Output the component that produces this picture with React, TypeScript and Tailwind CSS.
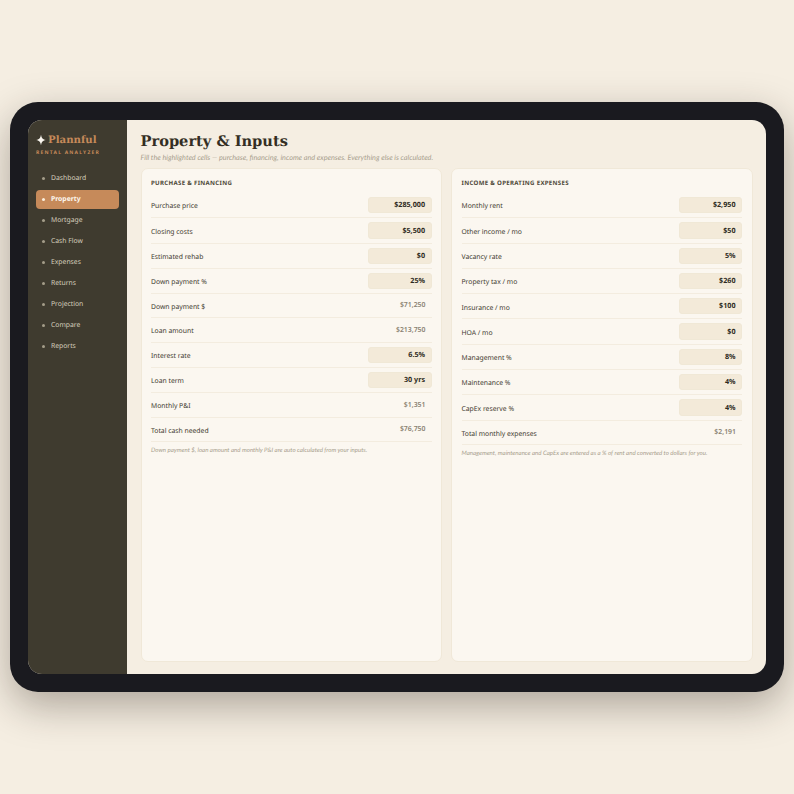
const nav = ["Dashboard","Property","Mortgage","Cash Flow","Expenses","Returns","Projection","Compare","Reports"];
type R = [string,string,boolean];
const left: R[] = [["Purchase price","$285,000",true],["Closing costs","$5,500",true],["Estimated rehab","$0",true],["Down payment %","25%",true],["Down payment $","$71,250",false],["Loan amount","$213,750",false],["Interest rate","6.5%",true],["Loan term","30 yrs",true],["Monthly P&I","$1,351",false],["Total cash needed","$76,750",false]];
const right: R[] = [["Monthly rent","$2,950",true],["Other income / mo","$50",true],["Vacancy rate","5%",true],["Property tax / mo","$260",true],["Insurance / mo","$100",true],["HOA / mo","$0",true],["Management %","8%",true],["Maintenance %","4%",true],["CapEx reserve %","4%",true],["Total monthly expenses","$2,191",false]];

function Row({ r }: { r: R }) {
  return (
    <div className="flex items-center justify-between border-b border-[#f3ecdf] py-1">
      <span className="pt-[1.5px] text-[6.8px] leading-[11px] text-[#3f3a2f]">{r[0]}</span>
      {r[2] ? (
        <span className="flex h-[16.3px] w-[63.5px] items-center justify-end rounded-[3px] border border-[#f0e8d6] bg-[#f3ead9] pr-[5.5px] pt-[1px] text-[7.2px] font-bold text-[#2e2a22]">{r[1]}</span>
      ) : (
        <span className="flex h-[15.3px] items-center pr-[6px] pt-[1.5px] text-[6.9px] font-semibold text-[#8a8272]">{r[1]}</span>
      )}
    </div>
  );
}

function Card({ title, rows, note }: { title: string; rows: R[]; note: string }) {
  return (
    <div className="min-w-0 flex-1 rounded-[7px] border border-[#f0e8d8] bg-[#fbf7f0] px-[9.5px] pt-[9px]">
      <div className="mb-[1px] h-[14px] text-[6.1px] font-bold leading-[10px] tracking-[0.3px] text-[#4f4939]">{title}</div>
      {rows.map((r) => <Row key={r[0]} r={r} />)}
      <p className="mt-[4px] font-['Lato',sans-serif] text-[6.1px] italic leading-[10px] text-[#a8a08e]">{note}</p>
    </div>
  );
}

export default function App() {
  return (
    <div className="flex h-[794px] w-[794px] items-start justify-center bg-[#f5eee2] pt-[102px] font-['Noto_Sans',sans-serif] antialiased [text-rendering:geometricPrecision]">
      <div className="h-[590px] w-[774px] rounded-[28px] bg-[#1a1a1f] p-[18px] shadow-[0_14px_40px_rgba(40,30,20,0.35)]">
        <div className="flex h-[554px] overflow-hidden rounded-[14px] bg-[#f5eee2]">
          <aside className="w-[99px] shrink-0 bg-[#3f3b2f] px-2">
            <div className="flex items-center gap-[2px] pt-[12px]">
              <svg width="10" height="12" viewBox="0 0 10 12"><path d="M5 0.5 C5.6 4 6.2 5.2 9.8 6 C6.2 6.8 5.6 8 5 11.5 C4.4 8 3.8 6.8 0.2 6 C3.8 5.2 4.4 4 5 0.5Z" fill="#fbf7f0"/></svg>
              <span className="font-['DejaVu_Serif',serif] text-[10.2px] font-bold leading-[16px] text-[#c68a5a]">Plannful</span>
            </div>
            <div className="mt-[1px] text-[5px] font-bold leading-[8px] tracking-[1.2px] text-[#c68a5a]">RENTAL ANALYZER</div>
            <nav className="mt-[11.5px] flex flex-col gap-[2px]">
              {nav.map((n) => {
                const a = n === "Property";
                return (
                  <div key={n} className={`flex h-[19px] items-center gap-[6px] rounded-[4px] pl-[6px] text-[6.8px] ${a ? "bg-[#c68a5a] font-bold text-[#fdf8ef]" : "text-[#d6cfbd]"}`}>
                    <span className={`size-[3px] rounded-full ${a ? "bg-[#fbeedb]" : "bg-[#a49d89]"}`} />
                    <span className="pt-[1px]">{n}</span>
                  </div>
                );
              })}
            </nav>
          </aside>
          <main className="flex min-w-0 flex-1 flex-col px-[13.5px] pb-[12px] pt-[11px]">
            <h1 className="font-['DejaVu_Serif',serif] text-[14.6px] font-bold leading-[22px] text-[#342e24]">Property &amp; Inputs</h1>
            <p className="font-['Lato',sans-serif] text-[7.25px] italic leading-[10px] text-[#a8a08e]">Fill the highlighted cells — purchase, financing, income and expenses. Everything else is calculated.</p>
            <div className="mt-[5px] flex min-h-0 flex-1 gap-[9px]">
              <Card title="PURCHASE & FINANCING" rows={left} note="Down payment $, loan amount and monthly P&I are auto calculated from your inputs." />
              <Card title="INCOME & OPERATING EXPENSES" rows={right} note="Management, maintenance and CapEx are entered as a % of rent and converted to dollars for you." />
            </div>
          </main>
        </div>
      </div>
    </div>
  );
}
